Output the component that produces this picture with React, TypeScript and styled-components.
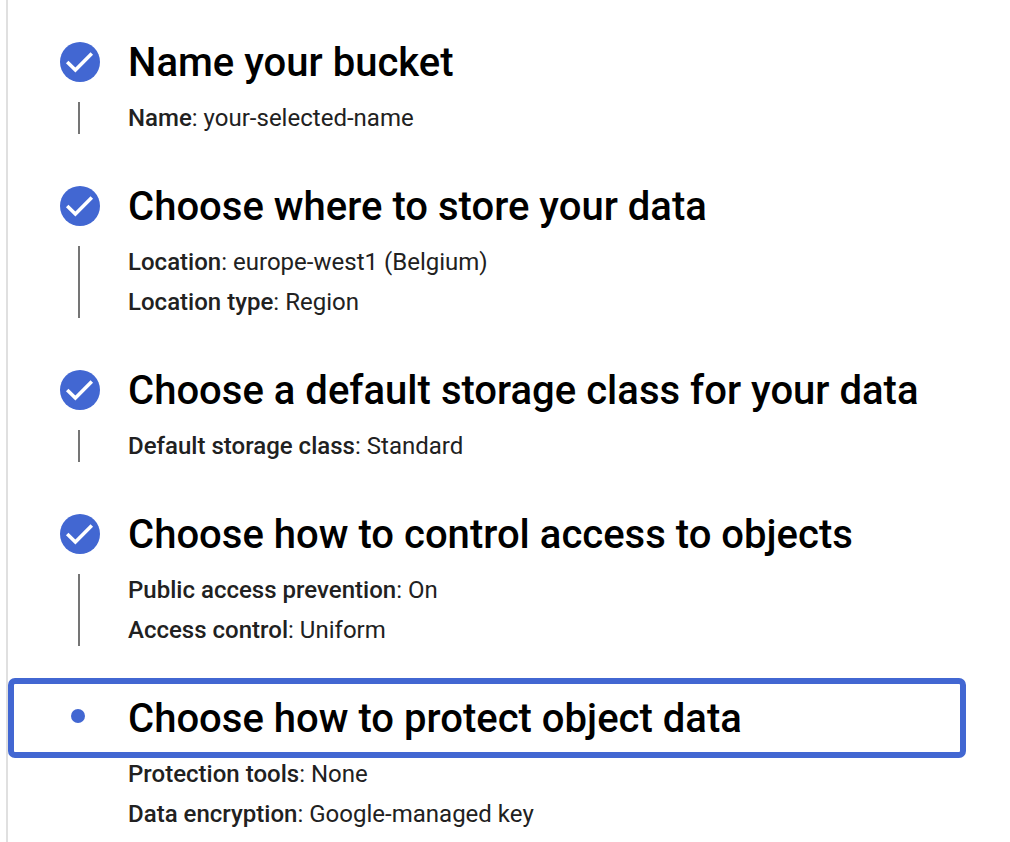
import React from "react";
import styled, { createGlobalStyle } from "styled-components";

const Global = createGlobalStyle`
  * { box-sizing: border-box; }
  body { margin: 0; background: #fff; font-family: Roboto, sans-serif; overflow: hidden; }
`;

const Panel = styled.main`
  height: 842px;
  margin-left: 6px;
  padding-top: 30px;
  border-left: 2px solid #e0e0e0;
  overflow: hidden;
`;

const Step = styled.section<{ $rows: number }>`
  height: ${p => 104 + p.$rows * 40}px;
`;

const Header = styled.div<{ $active?: boolean }>`
  display: flex;
  align-items: center;
  width: 958px;
  height: ${p => (p.$active ? 80 : 64)}px;
  margin-top: ${p => (p.$active ? -8 : 0)}px;
  padding-left: 46px;
  border: ${p => (p.$active ? "6px solid #4267d2" : "0 solid transparent")};
  border-left-width: 6px;
  border-radius: ${p => (p.$active ? 7 : 0)}px;
`;

const Marker = styled.div`
  display: flex;
  justify-content: center;
  width: 40px;
  margin-right: 28px;
`;

const Dot = styled.span`
  width: 14px;
  height: 14px;
  margin: 0 4px 4px 0;
  border-radius: 50%;
  background: #4267d2;
`;

const Title = styled.h2`
  margin: 2px 0 0;
  color: #000;
  font-size: 40px;
  line-height: 64px;
  font-weight: 500;
  letter-spacing: 0.02px;
  white-space: nowrap;
`;

const Body = styled.div`
  display: flex;
  padding-left: 70px;
`;

const Connector = styled.div<{ $hidden?: boolean }>`
  width: 2px;
  margin: 8px 48px 0 0;
  background: ${p => (p.$hidden ? "transparent" : "#757575")};
`;

const Details = styled.dl<{ $rows: number; $active?: boolean }>`
  height: ${p => p.$rows * 40}px;
  margin: ${p => (p.$active ? -4 : 0)}px 0 0;
  padding-top: ${p => (p.$active ? 0 : 4)}px;
  color: #212121;
  font-size: 24px;
  line-height: 40px;
`;

const Detail = styled.div`
  height: 40px;
  letter-spacing: 0.01px;
  white-space: nowrap;
`;

const Term = styled.dt`
  display: inline;
  font-weight: 500;
`;

const Value = styled.dd`
  display: inline;
  margin: 0;
`;

const steps = [
  { title: "Name your bucket", rows: [["Name", "your-selected-name"]] },
  { title: "Choose where to store your data", rows: [["Location", "europe-west1 (Belgium)"], ["Location type", "Region"]] },
  { title: "Choose a default storage class for your data", rows: [["Default storage class", "Standard"]] },
  { title: "Choose how to control access to objects", rows: [["Public access prevention", "On"], ["Access control", "Uniform"]] },
  { title: "Choose how to protect object data", rows: [["Protection tools", "None"], ["Data encryption", "Google-managed key"]], active: true },
];

const Check = () => (
  <svg width="40" height="40" viewBox="0 0 40 40">
    <circle cx="20" cy="20" r="20" fill="#4267d2" />
    <path d="M7.2 19.9L15.4 28L31.8 11.4" fill="none" stroke="#fff" strokeWidth="3.5" />
  </svg>
);

export default function App() {
  return (
    <>
      <Global />
      <Panel>
        {steps.map(s => (
          <Step key={s.title} $rows={s.rows.length}>
            <Header $active={s.active}>
              <Marker>{s.active ? <Dot /> : <Check />}</Marker>
              <Title>{s.title}</Title>
            </Header>
            <Body>
              <Connector $hidden={s.active} />
              <Details $rows={s.rows.length} $active={s.active}>
                {s.rows.map(([term, value]) => (
                  <Detail key={term}>
                    <Term>{term}</Term>: <Value>{value}</Value>
                  </Detail>
                ))}
              </Details>
            </Body>
          </Step>
        ))}
      </Panel>
    </>
  );
}
